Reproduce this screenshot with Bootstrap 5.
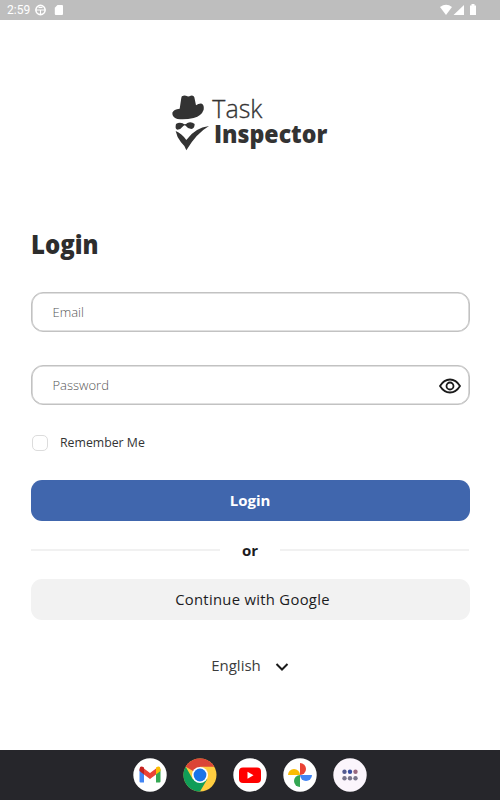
<!DOCTYPE html>
<html lang="en">
<head>
<meta charset="utf-8">
<meta name="viewport" content="width=device-width, initial-scale=1">
<title>Task Inspector</title>
<link href="https://cdn.jsdelivr.net/npm/bootstrap@5.3.0/dist/css/bootstrap.min.css" rel="stylesheet">
<style>
body{font-family:"Open Sans","Noto Sans",sans-serif;height:800px;overflow:hidden;color:#1c1c1e}
svg{display:block;flex:none}
.status{height:20px;background:#bebebe;font:12px/20px Roboto,sans-serif;padding:0 23px 0 7px}
.sd{margin-left:7px}
.brand{width:180px;height:75px;margin:65px auto 0}
.main{padding:0 30.5px}
.title{font:800 26px/36px "Open Sans",sans-serif;margin:66px 0 30px .5px;height:36px;color:#2d2d2d;transform:scaleX(.92);transform-origin:0 0}
.field{height:40px;border:1px solid #c2c2c2;box-shadow:inset 0 0 0 .6px #c2c2c2;border-radius:12px;padding:1px 8px 0 21px}
.field input{font-size:13px;font-weight:300;color:#555}
.field input::placeholder{color:#555;opacity:1}
.gap-field{margin-top:33px}
.remember{margin-top:27px;height:22px;font-size:12.3px;color:#333}
.remember .form-check-input{width:16px;height:16px;margin:0 12px 0 1.500px;border:1px solid #dcdcdc;border-radius:5px}
.action{height:41px;border-radius:11px;border:0;font-size:15px;padding:0}
.login{margin-top:26px;background:#4066ad;color:#fff;font-weight:700}
.google{background:#f2f2f2;color:#1c1c1e;font-weight:500;font-size:14.8px;letter-spacing:.3px;padding-left:5px}
.or{height:58px;font-weight:700;font-size:15px}
.or i{height:2px;width:189px;background:#f1f1f1}
.lang{height:24px;margin-top:33px;font-size:15px;color:#3c3c3c}
.chevron{margin:4px 0 0 14px}
.dock{height:50px;background:#26262b;gap:16px}
</style>
</head>
<body class="bg-white d-flex flex-column">
<header class="status d-flex align-items-center text-white">
  <span>2:59</span>
  <svg class="ms-1" width="13" height="12" viewBox="0 0 12 12" fill="none" stroke="#fff"><circle cx="6" cy="6" r="4.600" stroke-width="1.600"/><path d="M1 6h10M6 6v5M4 3.500h4"/></svg>
  <svg class="sd" width="10" height="12" viewBox="0 0 10 12"><path d="M3.500 1H8q1 0 1 1v8q0 1-1 1H1.800q-1 0-1-1V3.800z" fill="#fff"/></svg>
  <svg class="ms-auto" width="38" height="14" viewBox="0 0 38 14" fill="#fff"><path d="M1 4Q7.200-.5 13 4L7 12zM25 2v10H14.500zM31 2.500h1.500V1h3v1.500H37V12h-6z"/></svg>
</header>
<main class="main flex-grow-1">
  <svg class="brand" viewBox="0 0 540 225" fill="#333">
    <path d="M64 38Q64 32 70 32Q77 31 82 34Q87 35 92 32Q101 30 103 37L108 61Q117 54 126 56Q133 60 131 74Q125 92 101 99Q76 105 52 102Q36 96 37 83Q41 72 59 71Z"/>
    <path d="M48 117Q58 110 68 115Q75 121 82 114Q94 109 104 117Q104 130 94 132Q83 131 77 122Q74 119 70 123Q63 133 52 134Q44 132 48 117Z"/>
    <path d="M47 138Q65 145 79 165Q105 128 147 123Q109 145 79 196Q73 180 63 172Q50 155 47 138Z"/>
    <text x="157" y="100" font-family="Open Sans" font-size="79" font-weight="300" stroke="#333" stroke-width="1" textLength="150" lengthAdjust="spacingAndGlyphs">Task</text>
    <text x="162" y="175" font-family="Open Sans" font-size="74" font-weight="800" textLength="340" lengthAdjust="spacingAndGlyphs">Inspector</text>
  </svg>
  <h1 class="title">Login</h1>
  <form>
    <div class="field d-flex align-items-center"><input class="form-control border-0 p-0 shadow-none bg-transparent" type="email" placeholder="Email" aria-label="Email"></div>
    <div class="field gap-field d-flex align-items-center"><input class="form-control border-0 p-0 shadow-none bg-transparent" type="password" placeholder="Password" aria-label="Password">
      <svg width="22" height="16" viewBox="0 0 22 16" fill="none" stroke="#1a1a1a" stroke-width="1.800"><path d="M1 8Q5 1.500 11 1.500T21 8Q17 14.500 11 14.500T1 8Z"/><circle cx="11" cy="8" r="3.500"/></svg></div>
    <label class="remember d-flex align-items-center"><input class="form-check-input" type="checkbox">Remember Me</label>
    <button type="button" class="btn action login w-100 d-block">Login</button>
    <div class="or d-flex align-items-center justify-content-between"><i></i><span>or</span><i></i></div>
    <button type="button" class="btn action google w-100 d-block">Continue with Google</button>
  </form>
  <div class="lang d-flex justify-content-center align-items-center"><span>English</span>
    <svg class="chevron" width="14" height="10" viewBox="0 0 14 10" fill="none" stroke="#1a1a1a" stroke-width="2"><path d="M1.500 2L7 7.500 12.500 2"/></svg></div>
</main>
<nav class="dock d-flex justify-content-center align-items-center">
  <svg width="34" height="34" viewBox="0 0 34 34"><circle cx="17" cy="17" r="16.700" fill="#fff"/><path d="M6.500 11v12.500q0 1 1 1H11V15z" fill="#4285f4"/><path d="M23 15v9.500h3.500q1 0 1-1V11z" fill="#34a853"/><path d="M11 10.500v6L17 21l6-4.500v-6L17 15z" fill="#ea4335"/><path d="M6.500 13V11q.5-4 4.500-1.500v7z" fill="#c5221f"/><path d="M27.500 13V11q-.5-4-4.500-1.500v7z" fill="#fbbc04"/></svg>
  <svg width="34" height="34" viewBox="0 0 34 34"><circle cx="17" cy="17" r="16.500" fill="#ffcd40"/><path d="M17 17L2.700 8.700A16.500 16.500 0 0 1 31.300 8.700H17z" fill="#db4437"/><path d="M2.700 8.700A16.500 16.500 0 0 0 17 33.500L24.200 21.200 9.800 21.200z" fill="#109d58"/><circle cx="17" cy="17" r="8" fill="#fff"/><circle cx="17" cy="17" r="6.400" fill="#1a73e8"/></svg>
  <svg width="34" height="34" viewBox="0 0 34 34"><circle cx="17" cy="17" r="16.700" fill="#fff"/><rect x="6" y="9.500" width="22" height="15.500" rx="4" fill="#f00"/><path d="M14.500 13.800v7l6-3.500z" fill="#fff"/></svg>
  <svg width="34" height="34" viewBox="0 0 34 34"><circle cx="17" cy="17" r="16.700" fill="#fff"/><path d="M17 17V5a6 6 0 0 1 0 12" fill="#ea4335"/><path d="M17 17h12a6 6 0 0 1-12 0" fill="#4285f4"/><path d="M17 17v12a6 6 0 0 1 0-12" fill="#34a853"/><path d="M17 17H5a6 6 0 0 1 12 0" fill="#fbbc04"/></svg>
  <svg width="34" height="34" viewBox="0 0 34 34"><circle cx="17" cy="17" r="16.700" fill="#fbf5fc"/><g fill="#77738a"><circle cx="11.500" cy="13.700" r="2.200" fill="#53598f"/><circle cx="17" cy="13.700" r="2.200" fill="#374da0"/><circle cx="22.500" cy="13.700" r="2.200" fill="#98677e"/><circle cx="11.500" cy="20.200" r="2.200"/><circle cx="17" cy="20.200" r="2.200"/><circle cx="22.500" cy="20.200" r="2.200"/></g></svg>
</nav>
<script src="https://cdn.jsdelivr.net/npm/bootstrap@5.3.0/dist/js/bootstrap.bundle.min.js"></script>
</body>
</html>
